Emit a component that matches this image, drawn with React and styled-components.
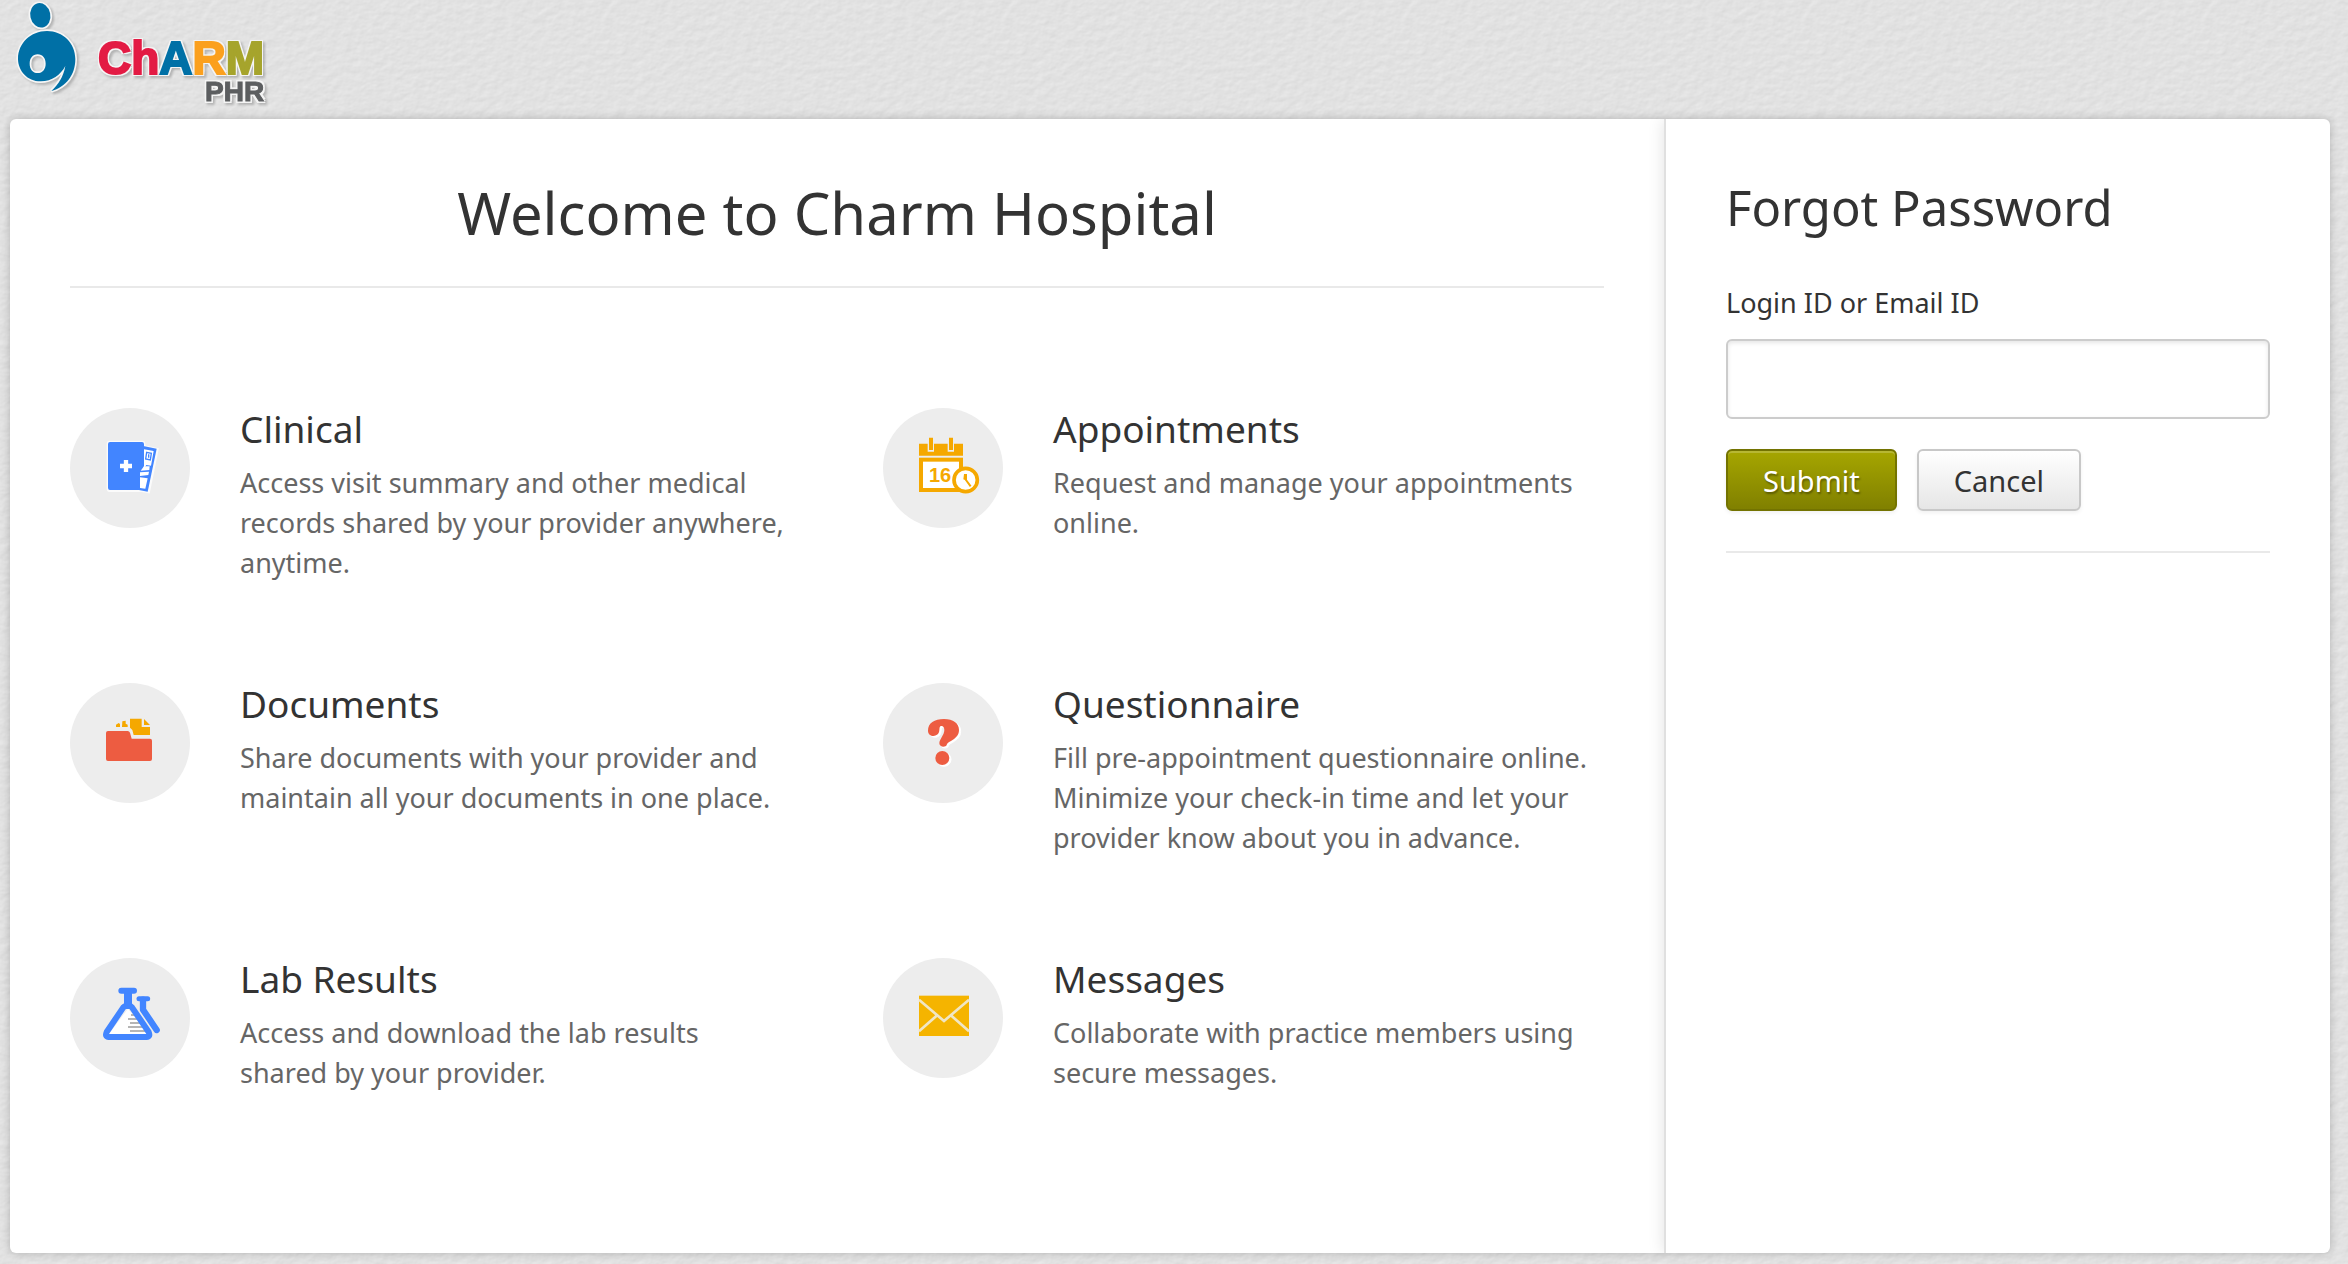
import React from "react";
import styled, { createGlobalStyle } from "styled-components";

const paper =
  "data:image/svg+xml," +
  encodeURIComponent(
    `<svg xmlns="http://www.w3.org/2000/svg" width="400" height="400"><filter id="p" x="0" y="0" width="100%" height="100%" color-interpolation-filters="sRGB"><feTurbulence type="fractalNoise" baseFrequency="0.1 0.14" numOctaves="3" seed="4" stitchTiles="stitch" result="n"/><feDiffuseLighting in="n" lighting-color="#ffffff" surfaceScale="0.15" diffuseConstant="1.08"><feDistantLight azimuth="235" elevation="55"/></feDiffuseLighting></filter><rect width="400" height="400" filter="url(#p)"/></svg>`
  );

const GlobalStyle = createGlobalStyle`
  *, *::before, *::after { box-sizing: border-box; }
  body {
    margin: 0;
    background: #e2e2e2 url("${paper}");
    color: #333;
    font-family: "Noto Sans", "Open Sans", sans-serif;
  }
`;

const Page = styled.div`
  min-height: 100vh;
  display: flex;
  flex-direction: column;
  padding: 0 18px 11px 10px;
`;

const Header = styled.header`
  height: 119px;
  display: flex;
  align-items: flex-start;
  padding-left: 4px;
`;

const LogoLink = styled.a`
  display: flex;
  gap: 18px;
  color: inherit;
  text-decoration: none;
`;

const LogoMark = styled.svg`
  width: 66px;
  height: 100px;
  filter: drop-shadow(2px 2px 1px rgba(0, 0, 0, 0.2));
`;

const Wordmark = styled.span`
  display: flex;
  flex-direction: column;
  align-items: flex-end;
  padding-top: 37px;
  font-family: "Liberation Sans", Arial, sans-serif;
  font-weight: 700;
  filter: drop-shadow(2px 2px 1px rgba(0, 0, 0, 0.2));
  text-shadow: 2px 0 #f4f4f4, -2px 0 #f4f4f4, 0 2px #f4f4f4, 0 -2px #f4f4f4,
    2px 2px #f4f4f4, -2px -2px #f4f4f4, 2px -2px #f4f4f4, -2px 2px #f4f4f4;
`;

const Brand = styled.span`
  font-size: 46px;
  line-height: 42px;
`;

const Letter = styled.span`
  color: ${(p) => p.$color};
  -webkit-text-stroke: 2px ${(p) => p.$color};
`;

const Product = styled.span`
  color: #5c5e60;
  font-size: 28px;
  line-height: 26px;
  -webkit-text-stroke: 1px #5c5e60;
`;

const Card = styled.main`
  flex: 1;
  display: flex;
  background: #fff;
  border-radius: 6px;
  box-shadow: 0 0 8px rgba(0, 0, 0, 0.22);
  overflow: hidden;
`;

const Intro = styled.section`
  flex: 1;
  padding: 56px 60px 60px;
`;

const Aside = styled.section`
  width: 666px;
  padding: 58px 60px 60px;
  border-left: 2px solid #e0e0e0;
  box-shadow: 0 0 16px rgba(0, 0, 0, 0.12);
`;

const Welcome = styled.h1`
  margin: 0;
  padding-bottom: 35px;
  border-bottom: 2px solid #e9e9e9;
  font-size: 58px;
  font-weight: 400;
  line-height: 76px;
  text-align: center;
`;

const Features = styled.div`
  display: grid;
  grid-template-columns: 1fr 1fr;
  column-gap: 92px;
  row-gap: 100px;
  padding-top: 120px;
`;

const Feature = styled.article`
  display: flex;
  align-items: flex-start;
  gap: 50px;
`;

const Icon = styled.svg`
  flex: none;
  width: 120px;
  height: 120px;
  border-radius: 50%;
  background: #ededed;
`;

const FeatureText = styled.div`
  flex: 1;
  padding-right: 4px;
`;

const FeatureTitle = styled.h2`
  margin: 0 0 13px;
  font-size: 37px;
  font-weight: 400;
  line-height: 42px;
`;

const FeatureBody = styled.p`
  margin: 0;
  color: #666;
  font-size: 27px;
  line-height: 40px;
`;

const FormTitle = styled.h2`
  margin: 0;
  font-size: 49px;
  font-weight: 400;
  line-height: 60px;
`;

const Form = styled.form`
  display: flex;
  flex-direction: column;
  padding: 46px 0 40px;
  border-bottom: 2px solid #e9e9e9;
`;

const Label = styled.label`
  margin-bottom: 16px;
  font-size: 27px;
  line-height: 40px;
`;

const Input = styled.input`
  height: 80px;
  padding: 0 16px;
  border: 2px solid #ccc;
  border-radius: 6px;
  background: #fff;
  box-shadow: inset 0 2px 4px rgba(0, 0, 0, 0.1);
  font: inherit;
  font-size: 27px;
`;

const Actions = styled.div`
  display: flex;
  gap: 20px;
  margin-top: 30px;
`;

const Button = styled.button`
  height: 62px;
  padding: 0 35px;
  border: 2px solid ${(p) => (p.$primary ? "#737300" : "#c8c8c8")};
  border-radius: 6px;
  background: ${(p) =>
    p.$primary
      ? "linear-gradient(#a6a600, #808000)"
      : "linear-gradient(#ffffff, #e6e6e6)"};
  box-shadow: inset 0 2px rgba(255, 255, 255, 0.2), 0 2px 4px rgba(0, 0, 0, 0.06);
  color: ${(p) => (p.$primary ? "#fff" : "#333")};
  text-shadow: ${(p) => (p.$primary ? "1px 2px 2px rgba(0, 0, 0, 0.35)" : "none")};
  font: inherit;
  font-size: 29px;
  cursor: pointer;
`;

const ClinicalIcon = () => (
  <Icon viewBox="30 24 360 360" aria-hidden="true">
    <path d="M150 126h96q6 0 6 6v8l40 8-26 128-20-4h-96q-6 0-6-6V132q0-6 6-6z" fill="none" stroke="#fbfbfb" strokeWidth="8" />
    <path d="M246 137l44 9-27 129-30-6z" fill="#4285ff" />
    <path d="M252 148l29 5-8 44-14-2-8 12z" fill="#fff" />
    <path d="M260 157l14 3-3 20-14-3z" fill="none" stroke="#4285ff" strokeWidth="4" />
    <path d="M266 163v10" stroke="#4285ff" strokeWidth="4" />
    <path d="M144 132q0-6 6-6h96q6 0 6 6v66l-12 14v58h-90q-6 0-6-6z" fill="#4285ff" />
    <path d="M252 199h17l-1 11-26 2zM240 217l27-2-2 10-25 3zM240 232l23 3-7 31-16-2z" fill="#fff" />
    <path d="M198 180v36M180 198h36" stroke="#fff" strokeWidth="13" />
  </Icon>
);

const AppointmentIcon = () => (
  <Icon viewBox="39 24 360 360" aria-hidden="true">
    <path d="M147 131h26v24h19v-24h41v24h19v-24h27v36H147z" fill="#f5a800" />
    <path d="M177 113h12v37h-12zM237 113h12v37h-12z" fill="#f5a800" />
    <rect x="153" y="179" width="120" height="91" fill="#fff" stroke="#f5a800" strokeWidth="12" />
    <text x="210" y="246" fill="#f5a800" fontFamily="Liberation Sans, Arial, sans-serif" fontSize="60" fontWeight="700" textAnchor="middle">16</text>
    <circle cx="287" cy="240" r="35" fill="#fff" stroke="#f5a800" strokeWidth="11" />
    <path d="M288 222v18l14 19" fill="none" stroke="#f5a800" strokeWidth="6" />
    <path d="M282 222h8v20l-10-4z" fill="#f5a800" />
  </Icon>
);

const DocumentsIcon = () => (
  <Icon viewBox="30 27 360 360" aria-hidden="true">
    <path d="M144 171h59q5 0 7 5l5 18h55q6 0 6 6v55q0 6-6 6H144q-6 0-6-6v-78q0-6 6-6z" fill="#ed5c41" />
    <path d="M210 134h35v25h25v24h-49l-4-15-7-7z" fill="#f5a800" />
    <path d="M252 135l18 18h-18zM187 142l10-2v9l6 3v7h-17zM168 152l8-5 4 3v9h-12z" fill="#f5a800" />
  </Icon>
);

const QuestionPath = () => (
  <>
    <path d="M174 170C174 147 193 135 222 135c28 0 45 13 45 33 0 17-11 25-24 33-9 5-12 7-13 12-2 7-22 8-22-5 0-12 15-25 15-40 0-8-4-12-8-12-7 0-6 5-7 13-1 22-34 22-34 1z" />
    <circle cx="217" cy="252" r="21" />
  </>
);

const QuestionIcon = () => (
  <Icon viewBox="39 27 360 360" aria-hidden="true">
    <g fill="#fff" stroke="#fff" strokeWidth="3" transform="translate(5 4)">
      <QuestionPath />
    </g>
    <g fill="#ed5c41">
      <QuestionPath />
    </g>
  </Icon>
);

const LabIcon = () => (
  <Icon viewBox="30 24 360 360" aria-hidden="true">
    <path d="M204 176l62 80H144z" fill="#fff" />
    <path d="M213 195h12M204 207h28M210 219h32M204 231h46M210 243h48" stroke="#b5b5b5" strokeWidth="6" />
    <path d="M204 128v48" stroke="#4285ff" strokeWidth="24" />
    <path d="M184 122h38" stroke="#4285ff" strokeWidth="18" strokeLinecap="round" />
    <path d="M198 168h12q3 0 6 4l50 74q6 15-6 15H146q-12 0-6-15l50-74q3-4 8-4z" fill="none" stroke="#4285ff" strokeWidth="18" strokeLinejoin="round" />
    <path d="M237 146h26" stroke="#4285ff" strokeWidth="15" strokeLinecap="round" />
    <path d="M249 149v30l41 61" fill="none" stroke="#4285ff" strokeWidth="19" strokeLinejoin="round" strokeLinecap="round" />
  </Icon>
);

const MessagesIcon = () => (
  <Icon viewBox="39 24 360 360" aria-hidden="true">
    <rect x="147" y="137" width="150" height="121" fill="#f5b400" />
    <path d="M147 149l75 64 75-64M147 244l52-46M297 244l-52-46" fill="none" stroke="#f0e6c4" strokeWidth="8" />
  </Icon>
);

const MarkShape = () => (
  <>
    <ellipse cx="121" cy="46" rx="30" ry="37" transform="rotate(-12 121 46)" />
    <path
      fillRule="evenodd"
      d="M141 93c48 0 85 37 85 84 0 48-28 84-72 96 22-20 36-42 42-75-14 26-40 46-74 46-40 0-68-32-68-68 0-46 38-83 87-83zM113 163c-15 0-24 12-24 28s9 28 24 28 24-12 24-28-9-28-24-28z"
    />
  </>
);

const features = [
  { title: "Clinical", icon: ClinicalIcon, body: "Access visit summary and other medical records shared by your provider anywhere, anytime." },
  { title: "Appointments", icon: AppointmentIcon, body: "Request and manage your appointments online." },
  { title: "Documents", icon: DocumentsIcon, body: "Share documents with your provider and maintain all your documents in one place." },
  { title: "Questionnaire", icon: QuestionIcon, body: "Fill pre-appointment questionnaire online. Minimize your check-in time and let your provider know about you in advance." },
  { title: "Lab Results", icon: LabIcon, body: "Access and download the lab results shared by your provider." },
  { title: "Messages", icon: MessagesIcon, body: "Collaborate with practice members using secure messages." },
];

const brandLetters = [
  ["Ch", "#e31b44"],
  ["A", "#0070a6"],
  ["R", "#fba01e"],
  ["M", "#a6a42c"],
];

export default function App() {
  return (
    <>
      <GlobalStyle />
      <Page>
        <Header>
          <LogoLink href="#">
            <LogoMark viewBox="42 0 198 300" aria-hidden="true">
              <g fill="#f6f6f6" stroke="#f6f6f6" strokeWidth="10">
                <MarkShape />
              </g>
              <g fill="#0070a6">
                <MarkShape />
              </g>
            </LogoMark>
            <Wordmark>
              <Brand>
                {brandLetters.map(([text, color]) => (
                  <Letter key={text} $color={color}>{text}</Letter>
                ))}
              </Brand>
              <Product>PHR</Product>
            </Wordmark>
          </LogoLink>
        </Header>
        <Card>
          <Intro>
            <Welcome>Welcome to Charm Hospital</Welcome>
            <Features>
              {features.map(({ title, icon: FeatureIcon, body }) => (
                <Feature key={title}>
                  <FeatureIcon />
                  <FeatureText>
                    <FeatureTitle>{title}</FeatureTitle>
                    <FeatureBody>{body}</FeatureBody>
                  </FeatureText>
                </Feature>
              ))}
            </Features>
          </Intro>
          <Aside>
            <FormTitle>Forgot Password</FormTitle>
            <Form onSubmit={(e) => e.preventDefault()}>
              <Label htmlFor="login">Login ID or Email ID</Label>
              <Input id="login" type="text" />
              <Actions>
                <Button type="submit" $primary>Submit</Button>
                <Button type="button">Cancel</Button>
              </Actions>
            </Form>
          </Aside>
        </Card>
      </Page>
    </>
  );
}
